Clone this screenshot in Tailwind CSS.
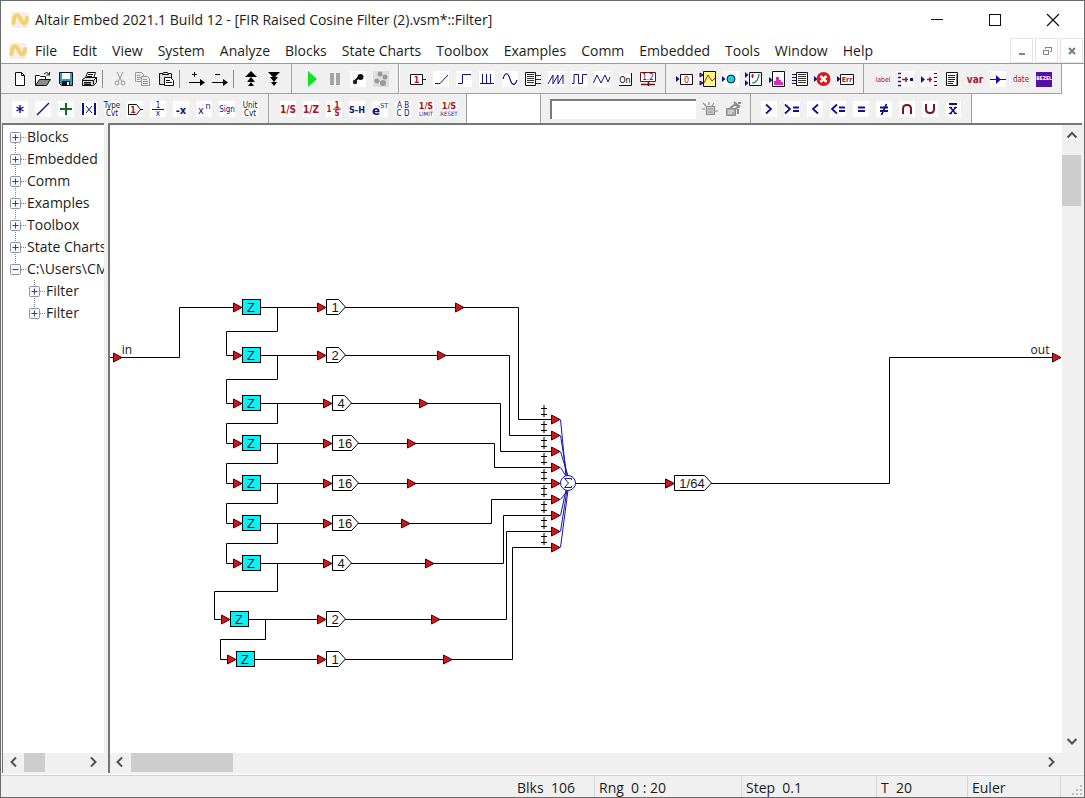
<!DOCTYPE html>
<html lang="en">
<head>
<meta charset="utf-8">
<title>Altair Embed</title>
<script src="https://cdn.jsdelivr.net/npm/@tailwindcss/browser@4"></script>
</head>
<body class="flex h-screen flex-col overflow-hidden border border-[#6b6b6b] bg-white font-['Open_Sans',sans-serif] text-sm text-[#1c1c1c]">

<header class="flex h-[37px] shrink-0 items-center pl-2">
  <svg class="h-5 w-6 shrink-0" viewBox="0 0 24 20"><rect x="2" y="2" width="18" height="16" rx="3" fill="#f3efee"/><path d="M4.500 13C5 4 9 3 11.500 9S17 15 18 8" fill="none" stroke="#f9cf68" stroke-width="4" stroke-linecap="round"/></svg>
  <h1 class="ml-[2px] whitespace-nowrap">Altair Embed 2021.1 Build 12 - [FIR Raised Cosine Filter (2).vsm*::Filter]</h1>
  <div class="ml-auto flex h-full pr-[2px]">
    <button aria-label="Minimize" class="grid w-[58px] place-items-center"><svg width="14" height="14"><path d="M1 6.500h12" stroke="#111"/></svg></button>
    <button aria-label="Maximize" class="grid w-[58px] place-items-center"><svg width="14" height="14"><rect x="1.500" y="1.500" width="11" height="11" fill="none" stroke="#111"/></svg></button>
    <button aria-label="Close" class="grid w-[58px] place-items-center"><svg width="14" height="14"><path d="M1 1l12 12M13 1L1 13" stroke="#111" stroke-width="1.200"/></svg></button>
  </div>
</header>

<nav class="flex h-[25px] shrink-0 items-center pl-2" aria-label="Main menu">
  <svg class="mr-[2px] h-5 w-6 shrink-0" viewBox="0 0 24 20"><rect x="0" y="2" width="18" height="16" rx="3" fill="#f3efee"/><path d="M2.500 13C3 4 7 3 9.500 9S15 15 16 8" fill="none" stroke="#f9cf68" stroke-width="4" stroke-linecap="round"/></svg>
  <div class="flex gap-[15px] whitespace-nowrap">
    <button>File</button><button>Edit</button><button>View</button><button>System</button><button>Analyze</button><button>Blocks</button><button>State Charts</button><button>Toolbox</button><button>Examples</button><button>Comm</button><button>Embedded</button><button>Tools</button><button>Window</button><button>Help</button>
  </div>
  <div class="ml-auto flex h-full gap-[2px] pr-px">
    <button aria-label="Minimize document" class="grid w-[23px] place-items-center border border-[#e4e4e4]"><svg width="12" height="12"><path d="M3 9h6" stroke="#74869a" stroke-width="2"/></svg></button>
    <button aria-label="Restore document" class="grid w-[23px] place-items-center border border-[#e4e4e4]"><svg width="12" height="12" fill="none" stroke="#74869a"><path d="M4.500 4V2.500h6v4H9M4 2.500h7M2 5.500h6M2.500 5v4.500h5V5"/></svg></button>
    <button aria-label="Close document" class="grid w-[23px] place-items-center border border-[#e4e4e4]"><svg width="12" height="12"><path d="M3 3l6 6M9 3l-6 6" stroke="#6c7c8c" stroke-width="2"/></svg></button>
  </div>
</nav>

<div class="flex h-[31px] shrink-0 border-t border-[#9a9a9a]" role="toolbar" aria-label="Standard">
  <div class="flex items-center border-r border-b border-[#a0a0a0] bg-[#f0f0f0] pr-[6px] pl-[7px]" data-icons="new open save print | cut copy paste | addc delc | up down"></div>
  <div class="flex items-center border-r border-b border-[#a0a0a0] bg-[#f0f0f0] pr-[6px] pl-2" data-icons="play pause probe snap"></div>
  <div class="flex items-center border-r border-b border-l border-[#a0a0a0] border-l-white bg-[#f0f0f0] px-[6px]" data-icons="const ramp step pulse sine import saw square tri button slider"></div>
  <div class="flex items-center border-r border-b border-[#a0a0a0] bg-[#f0f0f0] pr-[6px] pl-[7px]" data-icons="display plot light xy hist export stop err"></div>
  <div class="flex items-center border-r border-b border-[#a0a0a0] bg-[#f0f0f0] pr-[6px] pl-[7px]" data-icons="label merge split note var wire date bezel"></div>
</div>

<div class="flex h-[29px] shrink-0" role="toolbar" aria-label="Blocks">
  <div class="flex items-center border-r border-[#a0a0a0] bg-[#f0f0f0] px-[7px]" data-icons="mul div plus abs type gain inv neg pow sign unit"></div>
  <div class="flex items-center border-r border-[#a0a0a0] bg-[#f0f0f0] pr-[6px] pl-[7px]" data-icons="integ z resetint sh est abcd limit reset"></div>
  <div class="w-[74px] border-r border-[#a0a0a0]"></div>
  <div class="flex items-center border-r border-[#a0a0a0] bg-[#f0f0f0] pr-[6px] pl-[9px]">
    <input aria-label="Search blocks" class="mr-[2px] h-5 w-[146px] border-t-2 border-l-2 border-[#7a7a7a] bg-white px-1 outline-none">
    <div class="flex" data-icons="find findcfg"></div>
  </div>
  <div class="flex items-center border-r border-[#a0a0a0] bg-[#f0f0f0] pr-[7px] pl-[6px]" data-icons="gt ge lt le eq ne and or not"></div>
</div>

<main class="flex min-h-0 flex-1 bg-[#f0f0f0] pr-[2px] pl-px">
  <aside class="flex w-[102px] shrink-0 flex-col border-t-2 border-l border-[#757575] bg-white" aria-label="Block tree">
    <ul class="min-h-0 flex-1 overflow-hidden pt-px" id="tree"></ul>
    <div class="flex h-5 items-start bg-[#f0f0f0]">
      <button aria-label="Scroll tree left" class="grid h-[18px] w-[21px] place-items-center"><svg width="12" height="10"><path d="M8 0.500L3.500 5 8 9.500" fill="none" stroke="#505050" stroke-width="2"/></svg></button>
      <div class="h-[19px] w-[21px] bg-[#cdcdcd]"></div>
      <button aria-label="Scroll tree right" class="ml-auto grid h-[18px] w-[23px] place-items-center"><svg width="12" height="10"><path d="M4 0.500L8.500 5 4 9.500" fill="none" stroke="#505050" stroke-width="2"/></svg></button>
    </div>
  </aside>
  <section class="ml-[4px] flex min-w-0 flex-1 flex-col border-t-2 border-l-2 border-[#757575] bg-white" aria-label="Diagram">
    <div class="flex min-h-0 flex-1">
      <div class="min-w-0 flex-1 overflow-hidden">
        <svg id="diagram" width="952" height="628" viewBox="110 125 952 628" fill="none" stroke="#000" font-family="Liberation Sans, sans-serif" font-size="13"></svg>
      </div>
      <div class="flex w-5 flex-col bg-[#f0f0f0]">
        <button aria-label="Scroll up" class="grid h-[30px] w-[19px] place-items-center pb-[10px]"><svg width="12" height="10"><path d="M1.500 7.500L6 3l4.500 4.500" fill="none" stroke="#505050" stroke-width="2"/></svg></button>
        <div class="h-[51px] w-[19px] bg-[#cdcdcd]"></div>
        <button aria-label="Scroll down" class="mt-auto grid h-6 w-[19px] place-items-center"><svg width="12" height="10"><path d="M1.500 3L6 7.500 10.500 3" fill="none" stroke="#505050" stroke-width="2"/></svg></button>
      </div>
    </div>
    <div class="flex h-5 items-start bg-[#f0f0f0] pr-5">
      <button aria-label="Scroll left" class="grid h-[18px] w-[21px] place-items-center"><svg width="12" height="10"><path d="M7 0.500L2.500 5 7 9.500" fill="none" stroke="#505050" stroke-width="2"/></svg></button>
      <div class="h-[19px] w-[102px] bg-[#cdcdcd]"></div>
      <button aria-label="Scroll right" class="ml-auto grid h-[18px] w-[23px] place-items-center"><svg width="12" height="10"><path d="M4 0.500L8.500 5 4 9.500" fill="none" stroke="#505050" stroke-width="2"/></svg></button>
    </div>
  </section>
</main>

<footer class="mt-[2px] flex h-[22px] shrink-0 items-center justify-end border-t border-[#d4d4d4] bg-[#f0f0f0] leading-6 whitespace-pre outline-2 outline-[#f6f6f6]">
  <div class="h-full w-[77px]">Blks  106</div>
  <div class="h-full w-[147px] border-l border-[#d7d7d7] pl-1">Rng  0 : 20</div>
  <div class="h-full w-[135px] border-l border-[#d7d7d7] pl-1">Step  0.1</div>
  <div class="h-full w-[91px] border-l border-[#d7d7d7] pl-1">T  20</div>
  <div class="h-full w-[93px] border-l border-[#d7d7d7] pl-1">Euler</div>
  <div class="flex h-full w-6 items-end justify-end border-l border-[#d7d7d7] pr-px pb-px"><svg width="12" height="12" fill="#bdbdbd"><path d="M9 1h2v2H9zM5 5h2v2H5zM9 5h2v2H9zM1 9h2v2H1zM5 9h2v2H5zM9 9h2v2H9z"/></svg></div>
</footer>

<script>
const B = '#10108c', R = '#b01020';
const W = '<rect width="16" height="16" fill="#fff"/>';
const p = (d, c = '#000', w = 1, f = 'none') => `<path d="${d}" stroke="${c}" stroke-width="${w}" fill="${f}"/>`;
const t = (s, x, y, size, c = B, weight = 400) => `<text x="${x}" y="${y}" font-size="${size}" font-weight="${weight}" fill="${c}" text-anchor="middle">${s}</text>`;
const arrow = (x, y) => `<path d="M${x} ${y - 3}l3.500 3-3.500 3z" fill="${B}"/>`;
// Each drawing sits on a 16-unit square with three units of bleed on either side.
const icons = {
  new: ['New', p('M3.500 1.500h6l3 3v10h-9zM9.500 1.500v3h3', '#111', 1, '#fff')],
  open: ['Open', p('M.5 14V4.500h4l1 1h5v3', '#111', 1, '#fff') + p('M.5 14.500l4-6h11l-4 6z', '#111', 1, '#8a8a8a') + p('M9 3q3-3 5 .5M14.500 1v3h-3', '#111')],
  save: ['Save', p('M1.500 1.500h13v13h-11l-2-2z', '#111', 1, '#2f9fc0') + '<path d="M4 2h8v6H4z" fill="#fff"/><path d="M4 10h8v5H4z" fill="#111"/><path d="M9 11h2v3H9z" fill="#fff"/>'],
  print: ['Print', p('M4.500 7l2-5.500h8l-2 5.500', '#111', 1, '#fff') + p('M7 3.500h5M6 5.500h5', '#111') + p('M1.500 8.500l3-2h11v5l-3 3h-11zM1.500 9.500h11v4M12.500 9.500l3-3M3 11.500h7', '#111', 1, '#ddd') + p('M3 13.500h7', '#111', 2)],
  cut: ['Cut', p('M5 1l4.500 9M11 1L6.500 10', '#999') + '<circle cx="5" cy="12" r="2" stroke="#999" fill="none"/><circle cx="11" cy="12" r="2" stroke="#999" fill="none"/>'],
  copy: ['Copy', p('M.5 1.500h6l2 2v7h-8z', '#999', 1, '#eee') + p('M2 4.500h3M2 6.500h4M2 8.500h3', '#999') + p('M6.500 5.500h6l2 2v7h-8z', '#999', 1, '#eee') + p('M8 8.500h4M8 10.500h5M8 12.500h5', '#999')],
  paste: ['Paste', p('M1.500 2.500h12v11h-12z', '#111', 1, '#ddd') + p('M4.500 3.500l1-2h4l1 2z', '#111', 1, '#fff') + p('M6.500 6.500h6l3 3v5h-9z', '#111', 1, '#fff') + p('M8 9.500h4M8 11.500h6', '#111')],
  addc: ['Add connector', p('M3 3.500h5M5.500 1v5M0 11.500h12') + '<path d="M11 8l5 3.500-5 3.500z"/>'],
  delc: ['Remove connector', p('M3 3.500h5M0 11.500h12') + '<path d="M11 8l5 3.500-5 3.500z"/>'],
  up: ['Level up', '<path d="M8 0l6 6H2zM8 6l4 5H4zM8 11l3 4H5z"/>'],
  down: ['Level down', '<path d="M2 1h12L8 7zM4 6h8l-4 5zM5 11h6l-3 4z"/>'],
  play: ['Run', '<path d="M4 0l9 8-9 8z" fill="#0be61e"/>'],
  pause: ['Pause', '<path d="M3 2h4v12H3zM9 2h4v12H9z" fill="#a4a4a4"/>'],
  probe: ['Step once', W + '<circle cx="5" cy="11" r="2.200" fill="#301818"/><circle cx="10.500" cy="6" r="3" fill="#111"/><path d="M5 10l6-6" stroke="#111" stroke-width="2"/>'],
  snap: ['Snap', '<rect width="16" height="16" fill="#dedede"/><g fill="#999"><circle cx="7" cy="3" r="2.500"/><circle cx="12" cy="6" r="2.500"/><circle cx="4" cy="10" r="2.500"/><circle cx="10" cy="12" r="3"/></g>'],
  const: ['Constant', p('M.5 3.500h12v10h-12z', '#111', 1, '#fff') + p('M13 8.500h3', B) + t('1', 6.5, 12, 9, R, 700)],
  ramp: ['Ramp', W + p('M2 12.500h5L15 4', B)],
  step: ['Step', W + p('M2 12.500h4.500v-9H15', B)],
  pulse: ['Pulse train', W + p('M1 12.500h14M3.500 3v9M7.500 3v9M11.500 3v9', B)],
  sine: ['Sinusoid', W + p('M1 8C3 1 6 1 8 8s5 7 7 1', B, 1.2)],
  import: ['Import', p('M.5 1.500h10v13H.5z', '#111', 1, '#fff') + p('M2 3.500h7M2 5.500h7M2 7.500h7M2 9.500h7M2 11.500h7', '#333', 1) + p('M11 4.500h5M11 8.500h5M11 12.500h5', '#24247a')],
  saw: ['Sawtooth', W + p('M0 13L5 4v9l5-9v9l5-9v9', B)],
  square: ['Square wave', W + p('M1 12.500h2v-9h4.500v9h4v-9H16', B)],
  tri: ['Triangle wave', W + p('M-.5 12L3 4l4 8 4-8 3 7 2-5', B)],
  button: ['Button', '<path d="M2 2h12v12H2z" fill="#fff"/>' + p('M2 14.500h12.500V2', '#111') + t('On', 8, 12, 9, '#000')],
  slider: ['Slider', p('M.5 1.500h15v9H.5z', '#6c1010', 1, '#fff') + p('M1 13.500h14M8.500 10v5', '#6c1010', 1.5) + t('1.2', 8, 9, 8, B)],
  display: ['Display', arrow(-1, 8) + p('M3.500 3.500h12v10h-12z', '#111', 1, '#fff') + t('0', 9.5, 12, 9, R)],
  plot: ['Plot', p('M3.500.5h12v15h-12z', '#111', 1, '#ffff84') + p('M0 2l3 2-3 2zM0 10l3 2-3 2z', B, 1, R) + p('M4 12L8 4l4 6 3-3', R)],
  light: ['Light', W + arrow(-1, 8) + '<circle cx="8" cy="8" r="4" fill="#17cfd4" stroke="#115"/>'],
  xy: ['XY plot', arrow(-1, 4) + arrow(-1, 12) + p('M3.500 1.500h12v13h-12z', '#111', 1, '#fff') + p('M5 5h3M6.500 3v4', R) + p('M6 12q6 0 7-9', '#187540', 1.2)],
  hist: ['Histogram', arrow(0, 9) + p('M3.500.5h12v15h-12z', '#111', 1, '#fff') + '<path d="M5 14v-4h2V6h3v3h2v2h2v3z" fill="#d42ac0"/>'],
  export: ['Export', p('M4.500 1.500h11v13h-11z', '#111', 1, '#fff') + p('M6 3.500h8M6 5.500h8M6 7.500h8M6 9.500h8M6 11.500h8', '#333') + p('M0 3.500h4M0 6.500h4M0 9.500h4M0 12.500h4', B)],
  stop: ['Stop', arrow(-1, 8) + '<circle cx="8.500" cy="8" r="7" fill="#da1818"/>' + p('M5.500 5l6 6M11.500 5l-6 6', '#fff', 2.5)],
  err: ['Error', arrow(-1, 8) + p('M2.500 3.500h13v10h-13z', '#111', 1, '#fff') + t('Err', 9, 11, 7, R, 700)],
  label: ['Label', t('label', 8, 11, 7, R)],
  merge: ['Merge', W + p('M0 2.500h3M0 6.500h3M0 10.500h3M0 14.500h3', B, 1.5) + p('M4 8.500h6M8 6v5', R, 1.5) + '<path d="M12 7h3v3h-3z" fill="#10108c"/>'],
  split: ['Split', W + '<path d="M0 5l4 3.500L0 12z" fill="#1010c0"/>' + p('M6 8.500h5M9 6v5', R, 1.5) + p('M13 2.500h3M13 6.500h3M13 10.500h3M13 14.500h3', B)],
  note: ['Comment', p('M2.500 1.500h11v13h-11z', '#111', 1, '#fff') + p('M4 4.500h7M4 6.500h7M4 8.500h7M4 10.500h6M4 12.500h5', '#222', 1) + p('M12.500 3v11', '#888')],
  var: ['Variable', t('var', 8, 12, 10, R, 700)],
  wire: ['Wire positioner', W + p('M0 8.500h16', B) + '<path d="M6 4l5 4.500L6 13z" fill="#1010c0"/>'],
  date: ['Date', t('date', 8, 11, 8, R)],
  bezel: ['Bezel', '<rect y="1" width="16" height="15" fill="#5510a8"/>' + t('BEZEL', 8, 9, 5, '#fff', 700)],
  mul: ['Multiply', W + p('M8 4v8M4.500 6l7 4M11.500 6l-7 4', B, 1.4)],
  div: ['Divide', W + p('M2 14L14 2', B, 1.4)],
  plus: ['Sum', W + p('M8 2v12M2 8h12', '#087010', 2)],
  abs: ['Absolute value', W + p('M2 2v12M14 2v12', B, 2) + p('M5 5l6 7M11 5l-6 7', B)],
  type: ['Convert type', W + t('Type', 8, 7, 8, '#111') + t('Cvt', 8, 15, 8, '#111')],
  gain: ['Gain', W + p('M1.500 3.500h8l4 5-4 5h-8z', '#111', 1, '#fff') + p('M13 8.500h3') + t('1', 6, 12, 9, R, 700)],
  inv: ['Inverse', W + p('M2 8.500h12', B) + t('1', 8, 7, 8) + t('x', 8, 15, 8)],
  neg: ['Negate', W + t('-x', 8, 13, 11, B, 700)],
  pow: ['Power', W + t('x', 5, 13, 11) + t('n', 12, 8, 9)],
  sign: ['Sign', W + t('Sign', 8, 11, 8)],
  unit: ['Convert unit', W + t('Unit', 8, 7, 8, '#111') + t('Cvt', 8, 15, 8, '#111')],
  integ: ['Integrator', W + t('1/S', 8, 12, 10, R, 700)],
  z: ['Unit delay', W + t('1/Z', 8, 12, 10, R, 700)],
  resetint: ['Resettable integrator', W + t('1', 3, 11, 8, R, 700) + t('1', 11, 7, 8, R, 700) + t('S', 11, 15, 8, R, 700) + p('M7 8h8', R)],
  sh: ['Sample and hold', W + t('S-H', 8, 12, 9, B, 700)],
  est: ['Time delay', W + t('e', 4, 14, 13, B, 700) + t('-ST', 11, 7, 7)],
  abcd: ['State space', W + t('A B', 8, 7, 8) + t('C D', 8, 15, 8)],
  limit: ['Limited integrator', W + t('1/S', 8, 8, 9, R, 700) + t('LIMIT', 8, 15, 6)],
  reset: ['Reset integrator', W + t('1/S', 8, 8, 9, R, 700) + t('RESET', 8, 15, 6)],
  find: ['Find', p('M4.500 5.500h8v8h-8zM6 8h5M6 11h5M1 2l3 3M7 1v3M12 2l-2 3M0 8h3M13 10h3', '#8c8c8c', 1.2, '#ccc')],
  findcfg: ['Find options', p('M1.500 7.500h9v7h-9z', '#8c8c8c', 1, '#aaa') + p('M3 10h6M3 12h4', '#eee') + p('M5 7l6-4 2 3-4 3M9 1l6 5M13 2h3M13 8v5', '#8c8c8c', 2)],
  gt: ['Greater than', W + p('M5 3.500l5 4.500-5 4.500', B, 1.8)],
  ge: ['Greater or equal', W + p('M1 3.500L6 8l-5 4.500M9 6.500h6M9 10h6', B, 1.8)],
  lt: ['Less than', W + p('M11 3.500L6 8l5 4.500', B, 1.8)],
  le: ['Less or equal', W + p('M7 3.500L2 8l5 4.500M9 6.500h6M9 10h6', B, 1.8)],
  eq: ['Equal', W + p('M5 6.500h7M5 10h7', B, 1.8)],
  ne: ['Not equal', W + p('M4 6.500h8M4 10h8M10.500 3l-5 11', B, 1.8)],
  and: ['And', W + p('M4 13V8q0-4 4-4t4 4v5', '#801020', 2)],
  or: ['Or', W + p('M4 3v5q0 4 4 4t4-4V3', '#801020', 2)],
  not: ['Not', W + p('M4 3h8', B, 2) + p('M5 6l6 7M11 6l-6 7', B, 1.6) + p('M4 6.500h3M9 6.500h3M4 12.500h3M9 12.500h3', B)]
};
document.querySelectorAll('[data-icons]').forEach(bar => {
  bar.insertAdjacentHTML('beforeend', bar.dataset.icons.split(' ').map(name => name === '|'
    ? '<span class="flex w-2 shrink-0 pl-[2px]"><span class="h-[18px] border-l border-[#8c8c8c]"></span></span>'
    : `<button class="grid h-6 w-[23px] shrink-0 place-items-center" aria-label="${icons[name][0]}"><svg class="overflow-visible" width="22" height="16" viewBox="-3 0 22 16" font-family="DejaVu Sans Condensed, DejaVu Sans, sans-serif">${icons[name][1]}</svg></button>`
  ).join(''));
});

const rows = [['Blocks', 0], ['Embedded', 0], ['Comm', 0], ['Examples', 0], ['Toolbox', 0], ['State Charts', 0], ['C:\\Users\\CMP', 0, 1], ['Filter', 1], ['Filter', 1]];
document.getElementById('tree').innerHTML = rows.map(([name, depth, open], i) => {
  const first = i === 0, last = i === 6 || i === 8;
  return `<li class="flex h-[22px] items-center whitespace-nowrap ${depth ? 'pl-[25px]' : 'pl-[6px]'}"><svg class="shrink-0" width="18" height="22" fill="none">
    <path d="M6.500 ${first ? 11 : 0}V${last ? 11 : 22}M12 11.500h5" stroke="#808080" stroke-dasharray="1 1"/>
    <rect x="1.500" y="6.500" width="10" height="10" rx="1" fill="#f4f6fa" stroke="#8c94a4"/>
    <path d="M3.500 11.500h6${open ? '' : 'M6.500 8.500v6'}" stroke="#30457c"/></svg><span>${name}</span></li>`;
}).join('');

// Signal-flow graph: delay line on the left, taps with gains, summed in the middle.
const line = d => `<path d="${d}"/>`;
const tri = (x, y) => `<path d="M${x}.5 ${y - 4}l8.500 4.500-8.500 4.500z" fill="#d4141c" stroke="#3c0808"/>`;
const label = (s, x, y) => `<text x="${x}" y="${y}" text-anchor="middle" fill="#181818" stroke="none">${s}</text>`;
const block = (x, y) => tri(x - 9, y) + `<rect x="${x}.5" y="${y - 8}.5" width="18" height="15" fill="#00f4f8"/>` + label('Z', x + 9, y + 5);
const gain = (x, y, w, s) => tri(x - 9, y) + `<path d="M${x}.5 ${y - 8}.5h${w - 7}l7 7.500-7 7.500h${7 - w}z" fill="#fff"/>` + label(s, x + Math.floor(w / 2), y + 5);
const taps = [
  [307, 242, 326, 19, '1', 455, 518], [355, 242, 326, 19, '2', 437, 509], [403, 242, 332, 19, '4', 419, 500],
  [443, 242, 332, 26, '16', 407, 494], [483, 242, 332, 26, '16', 407, 494], [523, 242, 332, 26, '16', 401, 491],
  [563, 242, 332, 19, '4', 425, 503], [619, 230, 326, 19, '2', 431, 506], [659, 236, 326, 19, '1', 443, 512]
];
const bends = [331, 379, 423, 463, 503, 543, 591, 639];
let g = line('M110 357.500H179.500V307.500H233') + tri(113, 357);
taps.forEach(([y, bx, gx, w, s, mx, vx], i) => {
  const jy = 419 + i * 16;
  g += line(`M${bx + 18} ${y}.5H${gx - 9}`);
  g += y === jy ? line(`M${gx + w} ${y}.5H551`) : line(`M${gx + w} ${y}.5H${vx}.5V${jy}.5H551`);
  if (i < 8) g += line(`M${bx + 35}.5 ${y}.5V${bends[i]}.5H${taps[i + 1][1] - 16}.5V${taps[i + 1][0]}.5h7`);
  g += `<path d="M560.500 ${jy + .5}L${566 + i % 3} ${i < 4 ? 476 : i > 4 ? 490 : 483}" stroke="#1414b4"/>`;
  g += block(bx, y) + gain(gx, y, w, s) + tri(mx, y) + tri(551, jy);
  g += line(`M544 ${jy - 14}v12M541 ${jy - 11}.5h6M541 ${jy - 5}.5h6`);
});
g += line('M576 483.500H665') + line('M711 483.500H889.500V357.500H1052') + tri(665, 483) + tri(1052, 357) + gain(674, 483, 37, '1/64');
g += '<circle cx="568" cy="483" r="7.500" fill="#fff" stroke="#1414a0"/><path d="M571.500 480v-1.500h-7l4 4.500-4 4.500h7V486" stroke="#1414a0"/>';
g += `<g font-size="12" font-family="Open Sans, sans-serif">${label('in', 127, 354)}${label('out', 1040, 354)}</g>`;
document.getElementById('diagram').innerHTML = g;
</script>
</body>
</html>
